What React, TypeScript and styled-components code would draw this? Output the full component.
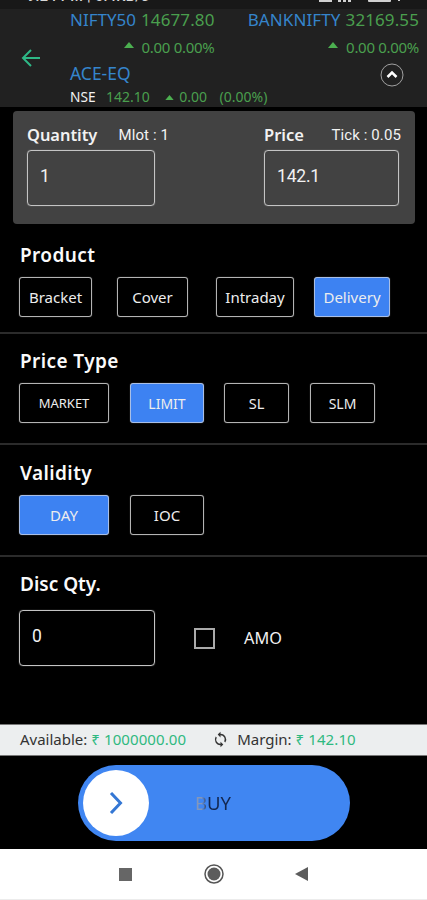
import React from "react";
import styled, { createGlobalStyle } from "styled-components";

const Global = createGlobalStyle`
  * { box-sizing: border-box; }
  body { margin: 0; background: #000; font-family: "Noto Sans", sans-serif; color: #f2f2f2; }
`;

const Screen = styled.main`
  width: 427px;
  height: 900px;
  overflow: hidden;
  display: flex;
  flex-direction: column;
  background: #000;
`;

const Text = styled.span<{ $size: number; $color?: string; $weight?: number; $space?: number; $font?: string }>`
  font-size: ${(p) => p.$size}px;
  line-height: 20px;
  white-space: pre;
  color: ${(p) => p.$color ?? "#f2f2f2"};
  font-weight: ${(p) => p.$weight ?? 400};
  letter-spacing: ${(p) => p.$space ?? 0}px;
  ${(p) => (p.$font ? `font-family: ${p.$font}, sans-serif;` : "")}
`;

const StatusBar = styled.div`
  height: 9px;
  flex: none;
  overflow: hidden;
  background: #181818;
  display: flex;
  justify-content: space-between;
  align-items: flex-end;
  padding: 0 26px 2px 27px;
`;

const Header = styled.header`
  height: 98px;
  flex: none;
  background: #212121;
  display: grid;
  grid-template-columns: 70px 1fr;
`;
const BackButton = styled.button`
  border: 0;
  padding: 0 0 0 21px;
  background: none;
  display: flex;
  align-items: center;
`;
const HeaderBody = styled.div`
  display: flex;
  flex-direction: column;
`;
const Indices = styled.div`
  display: flex;
  justify-content: space-between;
  padding-right: 8px;
  height: 50px;
`;
const IndexQuote = styled.div`
  display: flex;
  flex-direction: column;
  align-items: flex-end;
`;
const Line = styled.div<{ $gap: number; $h: number }>`
  flex: none;
  display: flex;
  align-items: center;
  gap: ${(p) => p.$gap}px;
  height: ${(p) => p.$h}px;
`;
const RaisedMark = styled.span`
  display: flex;
  padding-bottom: 5px;
`;
const Change = styled.span`
  display: flex;
  align-items: center;
  gap: 5px;
  margin: 0 2px 0 5px;
`;
const SymbolRow = styled.div`
  display: flex;
  justify-content: space-between;
  align-items: center;
  height: 28px;
  padding-right: 23px;
`;
const Collapse = styled.span`
  display: flex;
  padding-top: 4px;
`;

const OrderCard = styled.section`
  flex: none;
  margin: 4px 12px 0 13px;
  height: 113px;
  border-radius: 4px;
  background: #424242;
  display: flex;
  justify-content: space-between;
  padding: 14px 14px 0;
`;
const Field = styled.div<{ $w: number }>`
  width: ${(p) => p.$w}px;
`;
const FieldHead = styled.div`
  display: flex;
  justify-content: space-between;
  height: 25px;
`;
const InputBox = styled.div<{ $w: number }>`
  width: ${(p) => p.$w}px;
  height: 56px;
  border: 1px solid #c4c4c4;
  box-shadow: 0 0 1px #a0a0a0;
  border-radius: 4px;
  padding: 0 0 4px 12px;
  display: flex;
  align-items: center;
`;

const Section = styled.section<{ $h: number; $top: number; $last?: boolean }>`
  flex: none;
  height: ${(p) => p.$h}px;
  padding: ${(p) => p.$top}px 20px 0 19px;
  border-bottom: ${(p) => (p.$last ? "0" : "2px solid #2b2b2b")};
`;
const Title = styled.h2<{ $space: number; $h?: number }>`
  margin: 0 0 0 1px;
  font-size: 19px;
  font-weight: 600;
  line-height: 26px;
  height: ${(p) => p.$h ?? 35}px;
  letter-spacing: ${(p) => p.$space}px;
  color: #fafafa;
`;
const Options = styled.div`
  display: flex;
`;
const Option = styled.button<{ $w: number; $before?: number; $active?: boolean; $size: number }>`
  width: ${(p) => p.$w}px;
  height: 40px;
  margin-left: ${(p) => p.$before ?? 0}px;
  padding: 0;
  border: 1px solid ${(p) => (p.$active ? "#a9bfe6" : "#b4b4b4")};
  box-shadow: 0 0 1px #8a8a8a;
  border-radius: 3px;
  background: ${(p) => (p.$active ? "#3d82f2" : "#000")};
  color: #ededed;
  font: 400 ${(p) => p.$size}px "Noto Sans", sans-serif;
`;
const DiscRow = styled.div`
  display: flex;
  align-items: center;
`;
const Checkbox = styled.div`
  width: 21px;
  height: 21px;
  margin: 0 29px 0 39px;
  border: 2px solid #aaa;
`;

const Funds = styled.div`
  flex: none;
  height: 32px;
  background: #eceeef;
  border: solid #777;
  border-width: 1px 0;
  display: flex;
  align-items: center;
  padding: 0 0 2px 20px;
`;
const Refresh = styled.svg`
  margin: 0 8px 0 26px;
`;
const BuyArea = styled.div`
  flex: none;
  height: 93px;
  padding: 9px 77px 0 78px;
`;
const Slider = styled.div`
  height: 76px;
  border-radius: 38px;
  background: #4086f2;
  display: flex;
  align-items: center;
  padding-left: 5px;
`;
const Knob = styled.div`
  width: 66px;
  height: 66px;
  border-radius: 50%;
  background: #fff;
  display: flex;
  align-items: center;
  justify-content: center;
`;
const BuyLabel = styled.span`
  margin-left: 46px;
  font-size: 18.5px;
  line-height: 24px;
  color: transparent;
  background: linear-gradient(90deg, #8497ba 0 18%, #5575ad 24%, #12264f 36%);
  background-clip: text;
  -webkit-background-clip: text;
`;
const NavBar = styled.nav`
  flex: none;
  height: 51px;
  background: #fff;
  border-bottom: 1px solid #ececec;
  display: flex;
  align-items: center;
  padding: 0 119px 0 119px;
  justify-content: space-between;
`;

const GREEN = "#4a9f4e";
const BLUE = "#3585cc";
const MINT = "#2fb980";

const Up = ({ w, h }: { w: number; h: number }) => (
  <svg width={w} height={h} viewBox="0 0 10 6"><path d="M0 6 5 0l5 6z" fill="#4caf50" /></svg>
);

const Quote = ({ name, value, space }: { name: string; value: string; space: number }) => (
  <IndexQuote>
    <Line $gap={5} $h={22}>
      <Text $size={17} $color={BLUE} $space={space}>{name}</Text>
      <Text $size={17} $color={GREEN} $space={0.1}>{value}</Text>
    </Line>
    <Line $gap={8} $h={32}>
      <RaisedMark><Up w={10} h={6} /></RaisedMark>
      <Text $size={15} $color={GREEN} $space={-0.3}>0.00 0.00%</Text>
    </Line>
  </IndexQuote>
);

export default function App() {
  return (
    <Screen>
      <Global />
      <StatusBar>
        <Text $size={14.5} $font="Roboto" $weight={500} $color="#d8d8d8" $space={0.3}>9:24 PM | 0.4KB/s</Text>
        <svg width="83" height="7" fill="#d0d0d0"><path d="M1 0h13v2H1zM20 0h3v2h-3zM25 0h3v2h-3zM30 0h3v2h-3zM50 0h23v1.500l-1 .5H51l-1-.5zM80 0h2v1h-2z" /></svg>
      </StatusBar>
      <Header>
        <BackButton aria-label="Back">
          <svg width="20" height="18" viewBox="0 0 20 18" fill="none" stroke="#2eb886" strokeWidth="2"><path d="M19 9H2M10 1 2 9l8 8" /></svg>
        </BackButton>
        <HeaderBody>
          <Indices>
            <Quote name="NIFTY50" value="14677.80" space={0} />
            <Quote name="BANKNIFTY" value="32169.55" space={0.1} />
          </Indices>
          <SymbolRow>
            <Text $size={17.5} $color={BLUE}>ACE-EQ</Text>
            <Collapse>
              <svg width="24" height="24" viewBox="0 0 24 24" fill="none"><circle cx="12" cy="12" r="11" stroke="#a0a0a0" /><path d="m7.500 14 4.500-4.500 4.500 4.500" stroke="#fff" strokeWidth="2.500" /></svg>
            </Collapse>
          </SymbolRow>
          <Line $gap={10.5} $h={20}>
            <Text $size={13.7}>NSE</Text>
            <Text $size={14} $color={GREEN}>142.10</Text>
            <Change>
              <Up w={9} h={5} />
              <Text $size={14} $color={GREEN}>0.00</Text>
            </Change>
            <Text $size={14} $color={GREEN}>(0.00%)</Text>
          </Line>
        </HeaderBody>
      </Header>
      <OrderCard>
        <Field $w={142}>
          <FieldHead>
            <Text $size={16.4} $weight={600}>Quantity</Text>
            <Text $size={15} $font="Roboto" $space={0.1}>Mlot : 1</Text>
          </FieldHead>
          <InputBox $w={128}><Text $size={17.500} $font="Roboto">1</Text></InputBox>
        </Field>
        <Field $w={137}>
          <FieldHead>
            <Text $size={16.500} $weight={600}>Price</Text>
            <Text $size={15} $font="Roboto" $space={0.1}>Tick : 0.05</Text>
          </FieldHead>
          <InputBox $w={135}><Text $size={17.500} $font="Roboto" $space={-0.200}>142.1</Text></InputBox>
        </Field>
      </OrderCard>
      <Section $h={110} $top={18}>
        <Title $space={0.4}>Product</Title>
        <Options>
          <Option $w={73} $size={15}>Bracket</Option>
          <Option $w={71} $before={25} $size={15}>Cover</Option>
          <Option $w={78} $before={28} $size={15}>Intraday</Option>
          <Option $w={76} $before={20} $active $size={15}>Delivery</Option>
        </Options>
      </Section>
      <Section $h={111} $top={14}>
        <Title $space={0.4}>Price Type</Title>
        <Options>
          <Option $w={90} $size={13}>MARKET</Option>
          <Option $w={74} $before={21} $active $size={14}>LIMIT</Option>
          <Option $w={65} $before={20} $size={14.500}>SL</Option>
          <Option $w={65} $before={21} $size={14}>SLM</Option>
        </Options>
      </Section>
      <Section $h={112} $top={15}>
        <Title $space={0.4}>Validity</Title>
        <Options>
          <Option $w={90} $active $size={15}>DAY</Option>
          <Option $w={74} $before={21} $size={15}>IOC</Option>
        </Options>
      </Section>
      <Section $h={167} $top={14} $last>
        <Title $space={0} $h={39}>Disc Qty.</Title>
        <DiscRow>
          <InputBox $w={136}><Text $size={17.500} $font="Roboto">0</Text></InputBox>
          <Checkbox />
          <Text $size={16.3}>AMO</Text>
        </DiscRow>
      </Section>
      <Funds>
        <Text $size={15} $color="#333">Available: </Text>
        <Text $size={15} $color={MINT} $space={0.1}>₹ 1000000.00</Text>
        <Refresh width="17" height="17" viewBox="0 0 24 24" fill="#333"><path d="M12 4V1L8 5l4 4V6a6 6 0 0 1 5.300 8.800l1.500 1.500A8 8 0 0 0 12 4zm0 14a6 6 0 0 1-5.300-8.800L5.200 7.700A8 8 0 0 0 12 20v3l4-4-4-4z" /></Refresh>
        <Text $size={15} $color="#333">Margin: </Text>
        <Text $size={15} $color={MINT} $space={0.1}>₹ 142.10</Text>
      </Funds>
      <BuyArea>
        <Slider>
          <Knob><svg width="14" height="22" viewBox="0 0 14 22" fill="none" stroke="#3477d4" strokeWidth="3"><path d="m2 1 9.500 10L2 21" /></svg></Knob>
          <BuyLabel>BUY</BuyLabel>
        </Slider>
      </BuyArea>
      <NavBar>
        <svg width="13" height="13"><rect width="13" height="13" fill="#666" /></svg>
        <svg width="20" height="20" fill="none"><circle cx="10" cy="10" r="9" stroke="#555" strokeWidth="1.500" /><circle cx="10" cy="10" r="6.500" fill="#5c5c5c" /></svg>
        <svg width="13" height="14"><path d="M0 7 13 0v14z" fill="#5c5c5c" /></svg>
      </NavBar>
    </Screen>
  );
}
